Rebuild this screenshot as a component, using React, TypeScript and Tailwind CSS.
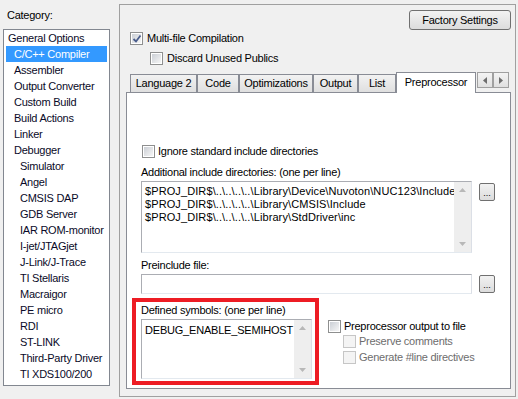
const FONT = "font-['Liberation_Sans',Arial,sans-serif] text-[11px] leading-[13px] tracking-[-0.25px]"

const categories: { label: string; indent: number }[] = [
  { label: "General Options", indent: 0 },
  { label: "C/C++ Compiler", indent: 1 },
  { label: "Assembler", indent: 1 },
  { label: "Output Converter", indent: 1 },
  { label: "Custom Build", indent: 1 },
  { label: "Build Actions", indent: 1 },
  { label: "Linker", indent: 1 },
  { label: "Debugger", indent: 1 },
  { label: "Simulator", indent: 2 },
  { label: "Angel", indent: 2 },
  { label: "CMSIS DAP", indent: 2 },
  { label: "GDB Server", indent: 2 },
  { label: "IAR ROM-monitor", indent: 2 },
  { label: "I-jet/JTAGjet", indent: 2 },
  { label: "J-Link/J-Trace", indent: 2 },
  { label: "TI Stellaris", indent: 2 },
  { label: "Macraigor", indent: 2 },
  { label: "PE micro", indent: 2 },
  { label: "RDI", indent: 2 },
  { label: "ST-LINK", indent: 2 },
  { label: "Third-Party Driver", indent: 2 },
  { label: "TI XDS100/200", indent: 2 },
]

const tabs = [
  { label: "Language 2", w: "w-[67px]" },
  { label: "Code", w: "w-[42px]" },
  { label: "Optimizations", w: "w-[74px]" },
  { label: "Output", w: "w-[45px]" },
  { label: "List", w: "w-[38px]" },
]

function CheckBox({ checked, disabled }: { checked?: boolean; disabled?: boolean }) {
  return (
    <span
      className={`relative flex h-[13px] w-[13px] shrink-0 items-center justify-center border ${
        disabled ? "border-[#c6c6c6] bg-[#f4f4f4]" : "border-[#8e8f8f] bg-white"
      }`}
    >
      <span
        className={`h-[9px] w-[9px] ${
          disabled ? "bg-[#f4f4f4]" : "bg-gradient-to-br from-[#cbcfd5] to-[#f6f6f6]"
        }`}
      />
      {checked && (
        <svg className="absolute left-[1px] top-[1px]" width="10" height="10" viewBox="0 0 10 10">
          <path d="M1.5 5 L4 7.5 L8.5 1.5" fill="none" stroke="#4a5d8c" strokeWidth="1.8" />
        </svg>
      )}
    </span>
  )
}

function DotsButton() {
  return (
    <div className="flex h-[18px] w-[16px] shrink-0 items-end justify-center rounded-[2px] border border-[#707070] bg-gradient-to-b from-[#f2f2f2] to-[#dcdcdc] pb-[2px] text-[9px] leading-[9px] tracking-normal text-black">
      ...
    </div>
  )
}

function ScrollBar() {
  return (
    <div className="flex w-[17px] shrink-0 flex-col items-center justify-between bg-[#eeeeee] py-[6px]">
      <svg width="7" height="4" viewBox="0 0 7 4">
        <path d="M0 4 L3.5 0 L7 4 Z" fill="#b8b8b8" />
      </svg>
      <svg width="7" height="4" viewBox="0 0 7 4">
        <path d="M0 0 L3.5 4 L7 0 Z" fill="#b8b8b8" />
      </svg>
    </div>
  )
}

export default function App() {
  return (
    <div className={`flex h-[399px] w-[518px] bg-[#f0f0f0] text-black ${FONT}`}>
      {/* category column */}
      <div className="flex w-[119px] shrink-0 flex-col pl-[3px] pt-[9px]">
        <div className="pl-[4px]">Category:</div>
        <div className="mt-[7px] w-[107px] border border-[#828790] bg-white pb-[3px]">
          {categories.map((c, i) => (
            <div key={c.label} className="flex h-[16px] items-center">
              {i === 1 ? (
                <div className="ml-[2px] flex h-[16px] w-[101px] items-center bg-[#3399ff] pl-[8px] text-white">
                  {c.label}
                </div>
              ) : (
                <span
                  className={`text-[#0a0a28] ${
                    c.indent === 0 ? "pl-[4px]" : c.indent === 1 ? "pl-[10px]" : "pl-[16px]"
                  }`}
                >
                  {c.label}
                </span>
              )}
            </div>
          ))}
        </div>
      </div>

      {/* options panel */}
      <div className="mt-[4px] flex h-[393px] w-[397px] flex-col border border-[#a0a0a0] pb-[7px] pl-[6px] pr-[4px] pt-[5px]">
        <div className="flex justify-end">
          <div className="flex h-[20px] w-[102px] items-center justify-center rounded-[3px] border border-[#707070] bg-gradient-to-b from-[#f2f2f2] to-[#dcdcdc]">
            Factory Settings
          </div>
        </div>

        <div className="ml-[4px] mt-[1px] flex h-[14px] items-center gap-[4px]">
          <CheckBox checked />
          <span>Multi-file Compilation</span>
        </div>
        <div className="ml-[24px] mt-[6px] flex h-[14px] items-center gap-[4px]">
          <CheckBox />
          <span>Discard Unused Publics</span>
        </div>

        {/* tabs */}
        <div className="ml-[4px] mt-[7px] flex h-[20px] items-end">
          {tabs.map((t) => (
            <div
              key={t.label}
              className={`flex h-[18px] ${t.w} items-center justify-center border border-b-0 border-[#898c95] bg-gradient-to-b from-[#f2f2f2] to-[#dfdfdf]`}
            >
              {t.label}
            </div>
          ))}
          <div className="relative z-10 -mb-[1px] flex h-[21px] w-[80px] items-start justify-center border border-b-0 border-[#898c95] bg-white pt-[3px]">
            Preprocessor
          </div>
          <div className="mb-[4px] ml-[1px] flex h-[16px]">
            {[0, 1].map((k) => (
              <div
                key={k}
                className="flex h-[16px] w-[16px] items-center justify-center border border-[#a0a0a0] bg-gradient-to-b from-[#f4f4f4] to-[#e0e0e0]"
              >
                <svg width="4" height="7" viewBox="0 0 4 7">
                  <path d={k === 0 ? "M4 0 L0 3.5 L4 7 Z" : "M0 0 L4 3.5 L0 7 Z"} fill="#6d6d6d" />
                </svg>
              </div>
            ))}
          </div>
        </div>

        {/* tab page */}
        <div className="flex flex-1 flex-col border border-[#898c95] bg-white">
          <div className="ml-[15px] mt-[51px] flex h-[14px] items-center gap-[3px]">
            <CheckBox />
            <span>Ignore standard include directories</span>
          </div>

          <div className="ml-[14px] mt-[8px]">Additional include directories: (one per line)</div>
          <div className="ml-[14px] mt-[2px] flex items-start gap-[7px]">
            <div className="flex h-[72px] w-[331px] border border-[#abadb3] border-b-[#e3e9ef] border-r-[#dbdfe6] bg-white">
              <div className="flex-1 overflow-hidden whitespace-nowrap pl-[3px] pt-[3px] tracking-[0.1px]">
                <div>$PROJ_DIR$\..\..\..\..\Library\Device\Nuvoton\NUC123\Include</div>
                <div>$PROJ_DIR$\..\..\..\..\Library\CMSIS\Include</div>
                <div>$PROJ_DIR$\..\..\..\..\Library\StdDriver\inc</div>
              </div>
              <ScrollBar />
            </div>
            <div className="mt-[2px]">
              <DotsButton />
            </div>
          </div>

          <div className="ml-[14px] mt-[6px]">Preinclude file:</div>
          <div className="ml-[14px] mt-[2px] flex items-start gap-[7px]">
            <div className="h-[20px] w-[331px] border border-[#abadb3] border-b-[#e3e9ef] border-r-[#dbdfe6] bg-white" />
            <div className="mt-[1px]">
              <DotsButton />
            </div>
          </div>

          <div className="mt-[4px] flex items-start">
            <div className="ml-[5px] flex h-[87px] w-[187px] flex-col border-4 border-[#ed1c24] pb-[2px] pl-[5px] pr-[3px] pt-[2px]">
              <div>Defined symbols: (one per line)</div>
              <div className="mt-[2px] flex h-[60px] border border-[#abadb3] border-b-[#e3e9ef] border-r-[#dbdfe6] bg-white">
                <div className="flex-1 overflow-hidden whitespace-nowrap pl-[3px] pt-[4px] tracking-[-0.2px]">
                  DEBUG_ENABLE_SEMIHOST
                </div>
                <ScrollBar />
              </div>
            </div>

            <div className="ml-[9px] mt-[21px] flex flex-col">
              <div className="flex h-[14px] items-center gap-[3px]">
                <CheckBox />
                <span>Preprocessor output to file</span>
              </div>
              <div className="ml-[15px] mt-[1px] flex h-[14px] items-center gap-[3px]">
                <CheckBox disabled />
                <span className="text-[#6d6d6d]">Preserve comments</span>
              </div>
              <div className="ml-[15px] mt-[2px] flex h-[14px] items-center gap-[3px]">
                <CheckBox disabled />
                <span className="text-[#6d6d6d]">Generate #line directives</span>
              </div>
            </div>
          </div>
        </div>
      </div>
    </div>
  )
}
